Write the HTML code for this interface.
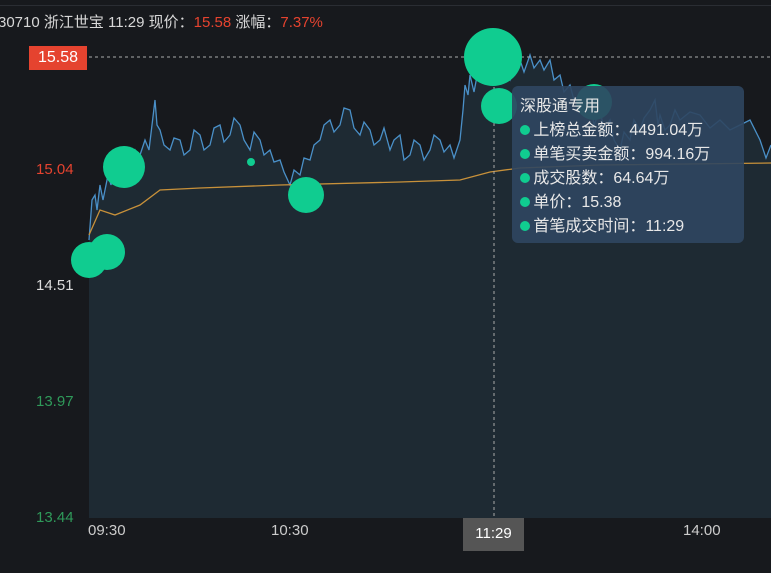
<!DOCTYPE html>
<html><head><meta charset="utf-8"><style>
body{margin:0;width:771px;height:573px;background:#17191d;overflow:hidden;position:relative;font-family:"Liberation Sans","Noto Sans CJK SC",sans-serif}
.t{position:absolute;white-space:nowrap}
</style></head><body>
<div style="position:absolute;left:0;top:5px;width:771px;height:1px;background:#2a2d33"></div>
<div class="t" style="left:-2px;top:11px;font-size:15px;color:#d8d8d8">30710 浙江世宝 11:29 现价：<span style="color:#e5432f">15.58</span> 涨幅：<span style="color:#e5432f">7.37%</span></div>
<svg width="771" height="573" style="position:absolute;left:0;top:0">
<polygon fill="#1e2a33" points="89,240 92,200 95,195 97,210 100,185 103,200 108,175 111,185 115,165 119,172 125,155 129,162 135,150 139,158 145,140 149,150 155,100 157,125 160,130 164,145 170,150 174,138 180,140 184,155 190,150 194,130 200,135 204,150 210,145 214,128 220,125 224,142 230,135 234,118 240,125 244,140 250,150 254,132 260,140 264,155 270,150 274,162 280,160 284,172 290,185 294,170 300,175 304,158 310,160 314,145 320,140 324,125 330,120 334,132 340,125 344,108 350,110 354,128 360,135 364,122 370,130 374,145 380,140 384,128 390,150 394,140 400,135 404,160 410,155 414,140 420,145 424,160 430,150 434,135 440,140 444,152 450,145 454,158 460,140 463,110 465,85 468,95 470,75 474,92 480,60 484,78 490,70 494,85 500,60 504,72 510,80 514,62 520,60 524,72 530,55 534,68 540,60 544,70 550,60 554,80 560,75 564,92 570,85 574,100 580,95 584,115 590,100 594,125 600,110 604,130 610,120 614,140 620,150 624,132 630,140 634,120 640,130 644,118 650,110 655,100 658,125 660,115 665,130 670,125 675,110 680,120 690,112 700,115 710,128 720,120 730,130 740,125 750,120 760,140 766,158 771,145 771,518 89,518"/>
<polyline fill="none" stroke="#4a90c8" stroke-width="1.3" points="89,240 92,200 95,195 97,210 100,185 103,200 108,175 111,185 115,165 119,172 125,155 129,162 135,150 139,158 145,140 149,150 155,100 157,125 160,130 164,145 170,150 174,138 180,140 184,155 190,150 194,130 200,135 204,150 210,145 214,128 220,125 224,142 230,135 234,118 240,125 244,140 250,150 254,132 260,140 264,155 270,150 274,162 280,160 284,172 290,185 294,170 300,175 304,158 310,160 314,145 320,140 324,125 330,120 334,132 340,125 344,108 350,110 354,128 360,135 364,122 370,130 374,145 380,140 384,128 390,150 394,140 400,135 404,160 410,155 414,140 420,145 424,160 430,150 434,135 440,140 444,152 450,145 454,158 460,140 463,110 465,85 468,95 470,75 474,92 480,60 484,78 490,70 494,85 500,60 504,72 510,80 514,62 520,60 524,72 530,55 534,68 540,60 544,70 550,60 554,80 560,75 564,92 570,85 574,100 580,95 584,115 590,100 594,125 600,110 604,130 610,120 614,140 620,150 624,132 630,140 634,120 640,130 644,118 650,110 655,100 658,125 660,115 665,130 670,125 675,110 680,120 690,112 700,115 710,128 720,120 730,130 740,125 750,120 760,140 766,158 771,145"/>
<polyline fill="none" stroke="#c8913a" stroke-width="1.3" points="89,235 100,210 115,215 140,205 160,190 200,188 280,185 400,182 460,180 490,172 520,168 600,165 771,163"/>
<line x1="89" y1="57" x2="771" y2="57" stroke="#aaa" stroke-dasharray="3,3"/>
<line x1="494" y1="57" x2="494" y2="518" stroke="#aaa" stroke-dasharray="3,3"/>
<g fill="#10cc90"><circle cx="89" cy="260" r="18"/><circle cx="107" cy="252" r="18"/><circle cx="124" cy="167" r="21"/><circle cx="306" cy="195" r="18"/><circle cx="493" cy="57" r="29"/><circle cx="499" cy="106" r="18"/><circle cx="594" cy="102" r="18"/><circle cx="251" cy="162" r="4"/></g>
<rect x="512" y="86" width="232" height="157" rx="6" fill="#2f4660" fill-opacity="0.9"/>
<g fill="#10cc90"><circle cx="525" cy="130" r="5"/><circle cx="525" cy="154" r="5"/><circle cx="525" cy="178" r="5"/><circle cx="525" cy="202" r="5"/><circle cx="525" cy="226" r="5"/></g>
</svg>
<div class="t" style="left:520px;top:95px;font-size:16px;color:#e8e8e8;line-height:24px">深股通专用<br>&nbsp;&nbsp;&nbsp;上榜总金额：4491.04万<br>&nbsp;&nbsp;&nbsp;单笔买卖金额：994.16万<br>&nbsp;&nbsp;&nbsp;成交股数：64.64万<br>&nbsp;&nbsp;&nbsp;单价：15.38<br>&nbsp;&nbsp;&nbsp;首笔成交时间：11:29</div>
<div class="t" style="left:29px;top:46px;width:58px;height:24px;background:#e5432f;color:#fff;font-size:16px;line-height:24px;text-align:center">15.58</div>
<div class="t" style="left:36px;top:161px;font-size:15px;color:#e5432f">15.04</div>
<div class="t" style="left:36px;top:277px;font-size:15px;color:#ddd">14.51</div>
<div class="t" style="left:36px;top:393px;font-size:15px;color:#2f9a5a">13.97</div>
<div class="t" style="left:36px;top:509px;font-size:15px;color:#2f9a5a">13.44</div>
<div class="t" style="left:88px;top:522px;font-size:15px;color:#ccc">09:30</div>
<div class="t" style="left:271px;top:522px;font-size:15px;color:#ccc">10:30</div>
<div class="t" style="left:463px;top:518px;width:61px;height:33px;background:#555;color:#fff;font-size:15px;line-height:31px;text-align:center">11:29</div>
<div class="t" style="left:683px;top:522px;font-size:15px;color:#ccc">14:00</div>
</body></html>
